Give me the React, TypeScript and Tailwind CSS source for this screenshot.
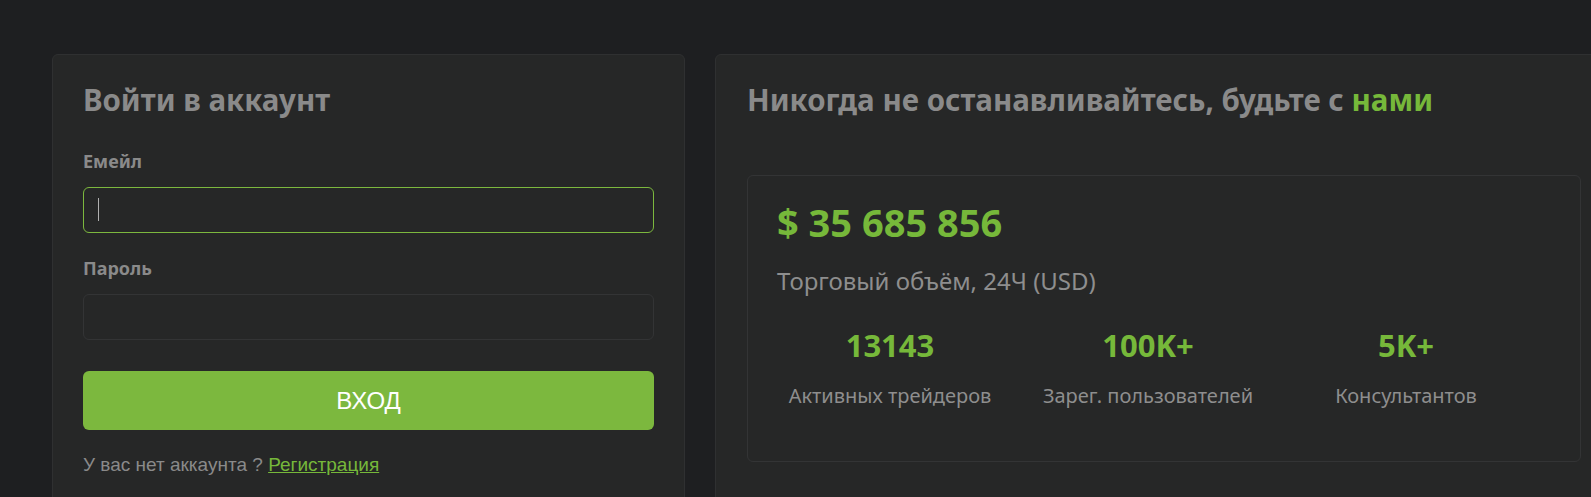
import React, { useState } from "react";

const stats = [
  { value: "13143", label: "Активных трейдеров" },
  { value: "100K+", label: "Зарег. пользователей" },
  { value: "5K+", label: "Консультантов" },
];

const font = { fontFamily: '"Noto Sans", "Open Sans", sans-serif' };
const arial = { fontFamily: '"Liberation Sans", Arial, sans-serif' };

export default function App() {
  const [email, setEmail] = useState("");
  const [password, setPassword] = useState("");

  return (
    <div
      className="w-[1591px] h-[497px] overflow-hidden bg-[#1e1f21] pt-[54px] pl-[52px] flex gap-[30px]"
      style={font}
    >
      {/* Login card */}
      <div className="w-[633px] shrink-0 h-[500px] rounded-md border border-[#2f3031] bg-[#262727] px-[30px] pt-[27px]">
        <h2 className="text-[29.5px] leading-[36px] font-bold text-[#8a8a8a]">Войти в аккаунт</h2>

        <form className="flex flex-col" onSubmit={(e) => e.preventDefault()}>
          <label htmlFor="email" className="mt-[31px] text-[18px] leading-[24px] font-bold text-[#8a8a8a]">
            Емейл
          </label>
          <div className="relative mt-[14px]">
            <input
              id="email"
              value={email}
              onChange={(e) => setEmail(e.target.value)}
              className="h-[46px] w-full rounded-md border border-[#7cb83e] bg-transparent px-[14px] text-[18px] text-[#aaaaaa] outline-none"
            />
            {email === "" && (
              <span className="pointer-events-none absolute left-[15px] top-[11px] h-[23px] w-px bg-[#b0b0b0]" />
            )}
          </div>

          <label htmlFor="password" className="mt-[23px] text-[18px] leading-[24px] font-bold text-[#8a8a8a]">
            Пароль
          </label>
          <input
            id="password"
            type="password"
            value={password}
            onChange={(e) => setPassword(e.target.value)}
            className="mt-[14px] h-[46px] w-full rounded-md border border-[#333435] bg-transparent px-[14px] text-[18px] text-[#aaaaaa] outline-none"
          />

          <button
            type="submit"
            className="mt-[31px] h-[59px] w-full rounded-md bg-[#7cb83e] text-[24px] text-white"
            style={arial}
          >
            ВХОД
          </button>

          <p className="mt-[23px] text-[19px] leading-[24px] text-[#8a8a8a]" style={arial}>
            У вас нет аккаунта ?{" "}
            <a href="#" className="text-[#76b83a] underline">
              Регистрация
            </a>
          </p>
        </form>
      </div>

      {/* Stats card */}
      <div className="w-[900px] shrink-0 h-[500px] rounded-md border border-[#2f3031] bg-[#262727] px-[31px] pt-[27px]">
        <h2 className="text-[29.5px] leading-[36px] font-bold text-[#8a8a8a]">
          Никогда не останавливайтесь, будьте с <span className="text-[#76b83a]">нами</span>
        </h2>

        <div className="mt-[57px] w-[834px] h-[287px] rounded-md border border-[#333435] pl-[29px] pt-[24px]">
          <div className="text-[38px] leading-[44px] font-bold text-[#76b83a]">$ 35 685 856</div>
          <div className="mt-[22px] text-[24px] leading-[30px] text-[#8e8e8e]">Торговый объём, 24Ч (USD)</div>

          <div className="mt-[31px] -ml-[16px] flex">
            {stats.map((s) => (
              <div key={s.label} className="w-[258px] flex flex-col items-center">
                <div className="text-[31px] leading-[36px] font-bold text-[#76b83a]">{s.value}</div>
                <div className="mt-[20px] text-[20px] leading-[26px] text-[#8e8e8e]">{s.label}</div>
              </div>
            ))}
          </div>
        </div>
      </div>
    </div>
  );
}
